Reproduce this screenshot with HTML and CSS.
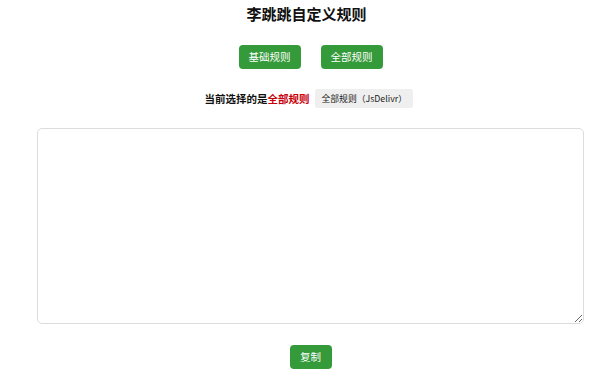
FILE: index.html
```html
<!DOCTYPE html>
<html lang="zh-CN">
<head>
<meta charset="utf-8">
<title>李跳跳自定义规则</title>
<link rel="stylesheet" href="styles.css">
</head>
<body>
<div class="page">
  <h1 class="title">李跳跳自定义规则</h1>
  <div class="tabs">
    <button class="btn">基础规则</button>
    <button class="btn">全部规则</button>
  </div>
  <div class="current">
    <span class="label">当前选择的是<span class="hl">全部规则</span></span>
    <span class="source">全部规则（JsDelivr）</span>
  </div>
  <textarea class="rules"></textarea>
  <div class="actions">
    <button class="btn">复制</button>
  </div>
</div>
</body>
</html>
```
FILE: styles.css
```css
html, body {
  margin: 0;
  padding: 0;
  background: #ffffff;
}
body {
  font-family: "Noto Sans CJK SC", "Liberation Sans", sans-serif;
  color: #111;
}
.page {
  margin-left: 37px;
  width: 547px;
  display: flex;
  flex-direction: column;
  align-items: center;
}
.title {
  margin: 0;
  padding-top: 4px;
  font-size: 15px;
  line-height: 20px;
  font-weight: 700;
  color: #111;
  transform: translateX(-4px);
}
.tabs {
  margin-top: 21px;
  display: flex;
  gap: 20px;
}
.btn {
  height: 24px;
  padding: 0 10px;
  border: none;
  border-radius: 4px;
  background: #349a3a;
  color: #fff;
  font-family: "Noto Sans CJK SC", "Liberation Sans", sans-serif;
  font-size: 10.5px;
  line-height: 24px;
  cursor: pointer;
}
.tabs .btn {
  width: 62px;
  padding: 0;
}
.current {
  margin-top: 20px;
  height: 19px;
  display: flex;
  align-items: center;
  gap: 5px;
  transform: translateX(-2px);
}
.label {
  font-size: 10.5px;
  font-weight: 700;
  color: #111;
}
.hl {
  color: #c8000a;
}
.source {
  height: 19px;
  width: 98px;
  box-sizing: border-box;
  padding-left: 7px;
  background: #efefef;
  border-radius: 2px;
  font-size: 8.8px;
  line-height: 19px;
  color: #222;
  white-space: nowrap;
}
.rules {
  margin-top: 20px;
  width: 547px;
  height: 196px;
  box-sizing: border-box;
  border: 1px solid #dcdcdc;
  border-radius: 5px;
  resize: vertical;
  outline: none;
  display: block;
}
.actions {
  margin-top: 18px;
}
.actions .btn {
  width: 42px;
  padding: 0;
}
```
